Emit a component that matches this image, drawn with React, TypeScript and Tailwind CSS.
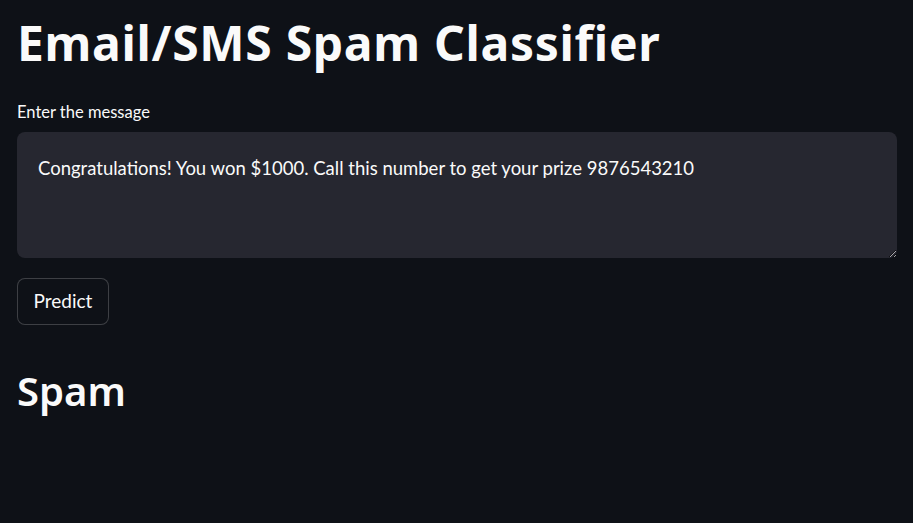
import React from "react";

export default function App() {
  return (
    <div className="min-h-[523px] w-full bg-[#0e1117] font-['Lato','Noto_Sans',sans-serif] text-[#fafafa]">
      <div className="flex flex-col items-start px-[17px] pt-[11px]">
        <h1 className="font-['Noto_Sans',sans-serif] text-[48px] font-bold leading-[64px] tracking-[0.7px] text-[#fafafa]">
          Email/SMS Spam Classifier
        </h1>
        <label className="mt-[27px] block text-[16.5px] leading-[20px] text-[#fafafa]">Enter the message</label>
        <div className="mt-[10px] h-[126px] w-[880px] rounded-[8px] bg-[#262730]">
          <textarea
            className="h-full w-full resize-y rounded-[8px] bg-transparent px-[21px] pb-[16px] pt-[23px] font-['Lato','Noto_Sans',sans-serif] text-[18.5px] leading-[26px] text-[#fafafa] outline-none"
            defaultValue="Congratulations! You won $1000. Call this number to get your prize 9876543210"
          />
        </div>
        <button className="mt-[20px] flex h-[47px] w-[92px] items-center justify-center rounded-[8px] border border-[rgba(250,250,250,0.2)] bg-[#0e1117] font-['Lato','Noto_Sans',sans-serif] text-[19px] text-[#fafafa]">
          Predict
        </button>
        <h2 className="mt-[42px] font-['Noto_Sans',sans-serif] text-[40px] font-semibold leading-[48px] text-[#fafafa]">
          Spam
        </h2>
      </div>
    </div>
  );
}
